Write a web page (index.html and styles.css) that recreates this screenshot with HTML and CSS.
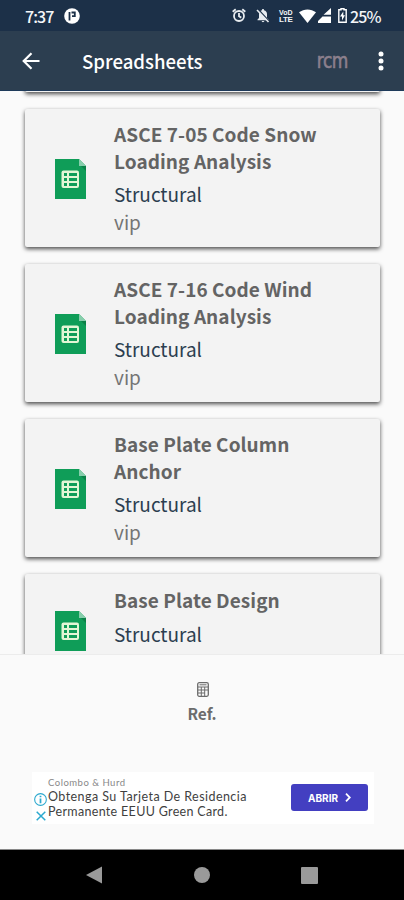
FILE: index.html
```
<!DOCTYPE html>
<html lang="en">
<head>
    <meta charset="UTF-8">
    <meta name="viewport" content="width=device-width, initial-scale=1.0">
    <title>Spreadsheets</title>
    <link rel="stylesheet" href="styles.css">
</head>
<body>

<svg class="defs" width="0" height="0">
    <symbol id="sheet" viewBox="0 0 31 40">
        <path fill="#0f9d58" d="M0 0h24l7 7v33H0z"/>
        <path fill="#87ceac" d="M24 0l7 7h-7z"/>
        <path fill="#0b8047" d="M26 7h5v5z"/>
        <rect x="6.5" y="11.5" width="17.5" height="17.5" rx="2" fill="#e3f6d5"/>
        <path fill="#0f9d58" d="M9 14h3v3H9zM14 14h8v3h-8zM9 19h3v3H9zM14 19h8v3h-8zM9 24h3v3H9zM14 24h8v3h-8z"/>
    </symbol>
</svg>

<!-- Status bar -->
<div class="status-bar">
    <span class="time">7:37</span>
    <svg class="app-dot" width="16" height="16" viewBox="0 0 16 16">
        <circle cx="8" cy="8" r="7.8" fill="#fff"/>
        <path d="M5.500 12.500V4M7.500 4.500h3.300v3.600H8" fill="none" stroke="#1c3048" stroke-width="1.800"/>
    </svg>
    <div class="status-icons">
        <svg class="alarm" width="14" height="15" viewBox="0 0 14 15" fill="none" stroke="#e8ecf0" stroke-width="1.8">
            <circle cx="7" cy="8" r="5"/>
            <path d="M7 5v3.300l2.300 1.300M.7 3.800l3-2.600M13.300 3.800l-3-2.600"/>
        </svg>
        <svg class="bell" width="14" height="15" viewBox="0 0 14 15">
            <path fill="#e8ecf0" d="M7 1c.8 0 1 .5 1 1.200 2 .5 3 2 3 4V10l1.500 1.500v.7h-11v-.7L3 10V6.200c0-2 1-3.500 3-4C6 1.500 6.200 1 7 1zM5.700 13h2.600c0 1.500-2.600 1.500-2.600 0z"/>
            <path d="M2.300 1.500l11 12" stroke="#1c3048" stroke-width="1.500"/>
            <path d="M1 2l11.500 12" stroke="#e8ecf0" stroke-width="1.600"/>
        </svg>
        <span class="volte"><span>VoD</span><span class="lte">LTE</span></span>
        <svg class="wifi" width="17" height="14" viewBox="0 0 17 14">
            <path fill="#fff" d="M0 3.300C5-.6 12-.6 17 3.300L8.500 14z"/>
        </svg>
        <svg class="signal" width="14" height="15" viewBox="0 0 14 15">
            <path fill="#fff" d="M13 0v6.800H5.500zM4.500 8.500H13V15H0v-2z"/>
        </svg>
        <svg class="battery" width="9" height="15" viewBox="0 0 9 15">
            <path fill="none" stroke="#fff" stroke-width="1.400" d="M3 1.700V.7h3v1h2.200v12.600H.8V1.700z"/>
            <path fill="#fff" d="M5.300 3.500L2 8.500h2v4l3-5.200H5.300z"/>
        </svg>
        <span class="percent">25%</span>
    </div>
</div>

<!-- Toolbar -->
<header class="toolbar">
    <svg class="back" width="18" height="18" viewBox="0 0 18 18" fill="none" stroke="#fff" stroke-width="2.200">
        <path d="M17.500 9H2M9.500 1.200L1.700 9l7.800 7.800"/>
    </svg>
    <h1>Spreadsheets</h1>
    <span class="logo">rcm</span>
    <svg class="more" width="6" height="20" viewBox="0 0 6 20" fill="#fff">
        <circle cx="3" cy="3" r="2.500"/>
        <circle cx="3" cy="10" r="2.500"/>
        <circle cx="3" cy="17" r="2.500"/>
    </svg>
</header>

<!-- Spreadsheet list -->
<main class="list">
    <div class="card card-top"></div>
    <div class="card">
        <svg class="sheet"><use href="#sheet"/></svg>
        <div class="info">
            <h2>ASCE 7-05 Code Snow<br>Loading Analysis</h2>
            <p class="category">Structural</p>
            <p class="level">vip</p>
        </div>
    </div>
    <div class="card">
        <svg class="sheet"><use href="#sheet"/></svg>
        <div class="info">
            <h2>ASCE 7-16 Code Wind<br>Loading Analysis</h2>
            <p class="category">Structural</p>
            <p class="level">vip</p>
        </div>
    </div>
    <div class="card">
        <svg class="sheet"><use href="#sheet"/></svg>
        <div class="info">
            <h2>Base Plate Column<br>Anchor</h2>
            <p class="category">Structural</p>
            <p class="level">vip</p>
        </div>
    </div>
    <div class="card card-short">
        <svg class="sheet"><use href="#sheet"/></svg>
        <div class="info">
            <h2>Base Plate Design</h2>
            <p class="category">Structural</p>
        </div>
    </div>
</main>

<!-- Bottom tab -->
<nav class="tab">
    <svg width="12" height="15" viewBox="0 0 12 15" fill="none" stroke="#6c6c6c">
        <rect x=".7" y=".7" width="10.600" height="13.600" rx="1.500" stroke-width="1.300"/>
        <path d="M1 5h10M1 8h10M1 11h7M4.300 5v9M7.700 5v9M2.500 2.800h7" stroke-width="1"/>
    </svg>
    <span>Ref.</span>
</nav>

<!-- Ad banner -->
<div class="ad-area">
    <div class="ad">
        <div class="ad-marks">
            <svg width="13" height="13" viewBox="0 0 12 12" fill="none" stroke="#2ba9cf">
                <circle cx="6" cy="6" r="5.400"/>
                <path d="M6 2.500v1.500M6 5v4.500" stroke-width="1.600"/>
            </svg>
            <svg width="10" height="10" viewBox="0 0 10 10" stroke="#2ba9cf" stroke-width="1.500">
                <path d="M.7.7l8.600 8.600M9.300.7L.7 9.300"/>
            </svg>
        </div>
        <div class="ad-text">
            <small>Colombo &amp; Hurd</small>
            <p>Obtenga Su Tarjeta De Residencia</p>
            <p class="line-two">Permanente EEUU Green Card.</p>
        </div>
        <button class="btn">ABRIR
            <svg width="6" height="9" viewBox="0 0 6 9" fill="none" stroke="#fff" stroke-width="1.800">
                <path d="M1 .7l3.800 3.800L1 8.300"/>
            </svg>
        </button>
    </div>
</div>

<!-- Android navigation -->
<div class="nav-bar">
    <svg width="16" height="18" viewBox="0 0 16 18"><path fill="#9a9a9a" d="M16 .5v17L0 9z"/></svg>
    <svg width="16" height="16" viewBox="0 0 16 16"><circle cx="8" cy="8" r="8" fill="#9a9a9a"/></svg>
    <svg width="17" height="17" viewBox="0 0 17 17"><rect width="17" height="17" rx="1" fill="#9a9a9a"/></svg>
</div>

</body>
</html>
```
FILE: styles.css
```
* {
    box-sizing: border-box;
}
body {
    width: 404px;
    height: 900px;
    margin: 0;
    overflow: hidden;
    display: flex;
    flex-direction: column;
    background-color: #fafafa;
    font-family: "Noto Sans CJK SC", "Noto Sans", sans-serif;
}
h1, h2, p {
    margin: 0;
}
svg {
    display: block;
    flex: none;
}
.defs {
    display: none;
}
.status-bar {
    flex: none;
    height: 31px;
    padding: 0 23px 0 25px;
    display: flex;
    align-items: center;
    background-color: #1c3048;
    color: #f4f6f8;
    font-size: 16px;
    font-weight: 500;
}
.time {
    width: 39px;
    letter-spacing: -0.9px;
}
.status-icons {
    margin-left: auto;
    display: flex;
    align-items: center;
}
.bell {
    margin-left: 10px;
}
.volte {
    width: 15px;
    margin-left: 9px;
    display: flex;
    flex-direction: column;
    font: bold 7px/7px "Liberation Sans", sans-serif;
}
.lte {
    font-size: 8px;
    letter-spacing: -0.3px;
}
.wifi {
    margin-left: 5px;
}
.signal {
    margin-left: 2px;
}
.battery {
    margin-left: 6px;
}
.percent {
    width: 31px;
    margin-left: 3px;
    letter-spacing: -0.9px;
}
.toolbar {
    flex: none;
    height: 60px;
    padding: 0 20px 0 22px;
    display: flex;
    align-items: center;
    background-color: #2c3e50;
    border-bottom: 1px solid #1e3a5a;
    color: #fff;
    z-index: 1;
}
.toolbar h1 {
    margin-left: 42px;
    font-size: 18.6px;
    font-weight: 500;
}
.logo {
    margin-left: auto;
    margin-right: 30px;
    color: #8c808d;
    font: 17px/22px "DejaVu Sans", sans-serif;
    letter-spacing: -0.4px;
    -webkit-text-stroke: 0.5px #8c808d;
    transform: scaleY(1.2);
}
.list {
    height: 564px;
    flex: none;
    padding: 0 24px 0 25px;
    display: flex;
    flex-direction: column;
    gap: 17px;
    overflow: hidden;
    border-bottom: 1px solid #ececec;
}
.card {
    flex: none;
    height: 138px;
    padding: 0 30px;
    display: flex;
    align-items: center;
    background-color: #f3f3f3;
    border-radius: 2px;
    box-shadow: 0 2px 4px rgba(0, 0, 0, 0.7);
}
/* scrolled under the toolbar, only the lower edge shows */
.card-top {
    margin-top: -137px;
}
.card-short {
    height: 112px;
    align-items: flex-start;
}
.card-short .sheet {
    margin-top: 37px;
}
.card-short .info {
    padding-top: 13px;
}
.sheet {
    width: 31px;
    height: 40px;
    margin-top: 2px;
}
.info {
    margin-left: 28px;
    padding-top: 1px;
    white-space: nowrap;
}
.info h2 {
    color: #646464;
    font-size: 19px;
    font-weight: bold;
    line-height: 26.5px;
    letter-spacing: 0.06px;
}
.category, .level {
    font-size: 19px;
    line-height: 28px;
}
.category {
    margin-top: 6px;
    color: #2c3e50;
}
.level {
    color: #757575;
}
.tab {
    flex: none;
    height: 116px;
    padding-top: 27px;
    display: flex;
    flex-direction: column;
    align-items: center;
    color: #6c6c6c;
    font-size: 15.5px;
    font-weight: bold;
}
.tab svg {
    margin-left: 2px;
}
.tab span {
    margin-top: 5px;
    line-height: 22px;
}
.ad-area {
    flex: none;
    height: 79px;
    padding: 1px 30px 0 32px;
    border-bottom: 1px solid #888;
}
.ad {
    height: 52px;
    padding: 0 6px 0 1px;
    display: flex;
    background-color: #fff;
}
.ad-marks {
    width: 15px;
    padding-top: 21px;
    display: flex;
    flex-direction: column;
    align-items: center;
    gap: 5px;
}
.ad-text {
    color: #3f3f3f;
    font-family: Lato, sans-serif;
    white-space: nowrap;
}
.ad-text small {
    display: block;
    margin-top: 5px;
    color: #888;
    font-size: 9.5px;
    line-height: 12px;
    letter-spacing: 0.5px;
}
.ad-text p {
    font-size: 12.5px;
    line-height: 15px;
    letter-spacing: 0.44px;
}
.ad-text .line-two {
    letter-spacing: 0.32px;
}
.btn {
    width: 77px;
    height: 27px;
    margin: 12px 0 0 auto;
    padding: 0;
    display: flex;
    align-items: center;
    justify-content: center;
    gap: 7px;
    background-color: #433fc1;
    color: #fff;
    border: none;
    border-radius: 3px;
    font: bold 10px Inter, sans-serif;
}
.nav-bar {
    flex: 1;
    padding: 0 86px;
    display: flex;
    align-items: center;
    justify-content: space-between;
    background-color: #000;
}
```
